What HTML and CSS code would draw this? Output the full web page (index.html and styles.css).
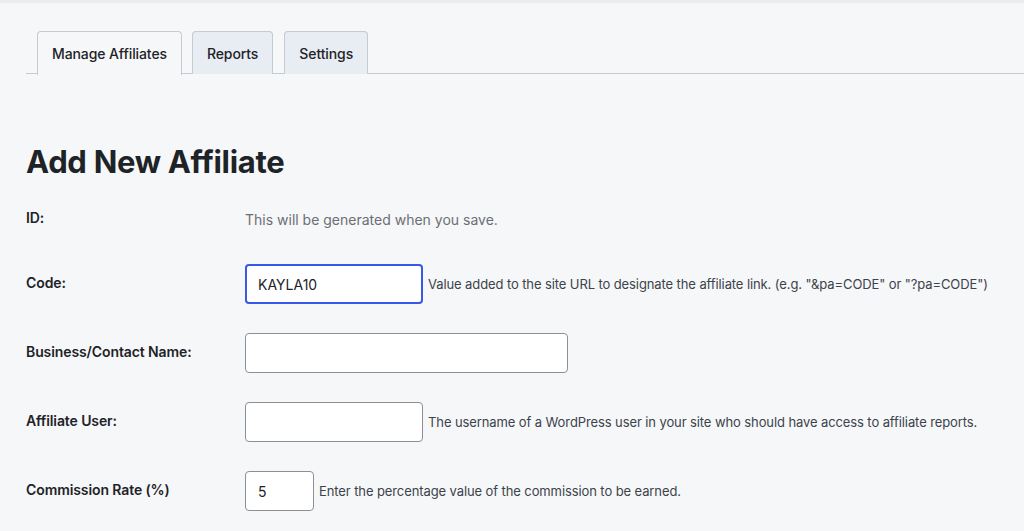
FILE: index.html
```html
<!DOCTYPE html>
<html lang="en">
  <head>
    <meta charset="UTF-8" />
    <meta name="viewport" content="width=device-width, initial-scale=1.0" />
    <title>Add New Affiliate</title>
    <link rel="stylesheet" href="styles.css">
  </head>
  <body>
    <div class="topbar"></div>

    <div class="wrap">
      <nav class="tabs">
        <a class="tab active" href="#">Manage Affiliates</a>
        <a class="tab" href="#">Reports</a>
        <a class="tab" href="#">Settings</a>
      </nav>

      <h1>Add New Affiliate</h1>

      <form class="form">
        <div class="row row-id">
          <label class="label">ID:</label>
          <span class="note">This will be generated when you save.</span>
        </div>

        <div class="row">
          <label class="label" for="code">Code:</label>
          <input class="field field-md focused" id="code" type="text" value="KAYLA10" />
          <span class="desc">Value added to the site URL to designate the affiliate link. (e.g. "&amp;pa=CODE" or "?pa=CODE")</span>
        </div>

        <div class="row">
          <label class="label" for="name">Business/Contact Name:</label>
          <input class="field field-lg" id="name" type="text" />
        </div>

        <div class="row">
          <label class="label" for="user">Affiliate User:</label>
          <input class="field field-md" id="user" type="text" />
          <span class="desc">The username of a WordPress user in your site who should have access to affiliate reports.</span>
        </div>

        <div class="row">
          <label class="label" for="rate">Commission Rate (%)</label>
          <input class="field field-sm" id="rate" type="text" value="5" />
          <span class="desc">Enter the percentage value of the commission to be earned.</span>
        </div>
      </form>
    </div>
  </body>
</html>
```

FILE: styles.css
```css
* {
  margin: 0;
  padding: 0;
  box-sizing: border-box;
  font-family: Inter, "Noto Sans", sans-serif;
}

body {
  background-color: #f6f7f9;
  color: #1d2327;
  height: 100vh;
  overflow: hidden;
}

.topbar {
  height: 3px;
  background-color: #ebecee;
}

.wrap {
  padding-left: 26px;
}

/* Tabs */
.tabs {
  display: flex;
  margin-top: 28px;
  padding-left: 11px;
  border-bottom: 1px solid #c5cad3;
  height: 43px;
}

.tab {
  display: flex;
  align-items: center;
  height: 43px;
  padding: 0 14px;
  margin-right: 11px;
  font-size: 14px;
  font-weight: 500;
  letter-spacing: -0.1px;
  color: #1d2327;
  text-decoration: none;
  background-color: #e8ecf3;
  border: 1px solid #c5cad3;
  border-bottom: none;
  border-radius: 4px 4px 0 0;
}

.tab.active {
  background-color: #f6f7f9;
  height: 44px;
  margin-right: 10px;
}

h1 {
  font-size: 31px;
  font-weight: 700;
  letter-spacing: -0.3px;
  margin-top: 68px;
  margin-bottom: 17px;
  line-height: 40px;
}

/* Form rows */
.form {
  display: flex;
  flex-direction: column;
  gap: 29px;
}

.row {
  display: flex;
  align-items: center;
  min-height: 40px;
}

.row-id {
  margin-bottom: -4px;
}

.label {
  width: 219px;
  flex-shrink: 0;
  font-size: 14px;
  font-weight: 600;
  letter-spacing: -0.1px;
  color: #1d2327;
  margin-top: -4px;
}

.note {
  font-size: 14px;
  color: #6b6f75;
}

.field {
  height: 40px;
  padding: 0 12px;
  font-size: 14px;
  color: #1d2327;
  background-color: #ffffff;
  border: 1px solid #8c8f94;
  border-radius: 4px;
  outline: none;
}

.field.focused {
  border: 2px solid #3858e9;
  padding: 0 11px;
}

.field-md {
  width: 178px;
}

.field-lg {
  width: 323px;
}

.field-sm {
  width: 69px;
}

.desc {
  margin-left: 5px;
  font-size: 13px;
  letter-spacing: -0.1px;
  color: #3c434a;
}
```
